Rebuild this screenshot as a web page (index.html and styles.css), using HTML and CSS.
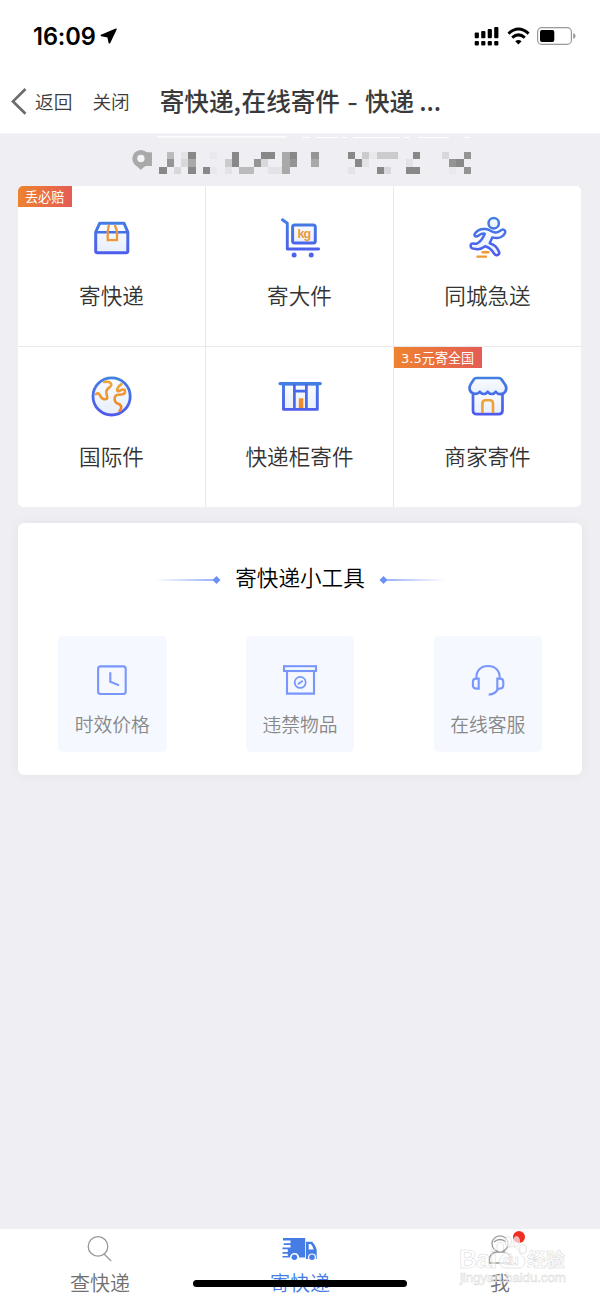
FILE: index.html
```html
<!DOCTYPE html>
<html lang="zh-CN">
<head>
<meta charset="utf-8">
<title>寄快递</title>
<link rel="stylesheet" href="styles.css">
</head>
<body>
<svg class="defs" width="0" height="0">
  <defs>
    <linearGradient id="blue-row1" gradientUnits="userSpaceOnUse" x1="0" y1="218" x2="0" y2="258"><stop offset="0" stop-color="#4280e2"/><stop offset="1" stop-color="#5058ee"/></linearGradient>
    <linearGradient id="blue-row2" gradientUnits="userSpaceOnUse" x1="0" y1="377" x2="0" y2="416"><stop offset="0" stop-color="#4280e2"/><stop offset="1" stop-color="#5058ee"/></linearGradient>
    <linearGradient id="tint" x1="0" y1="0" x2="0" y2="1"><stop offset="0" stop-color="#fafcff"/><stop offset="1" stop-color="#e7effc"/></linearGradient>
    <linearGradient id="orange" gradientUnits="userSpaceOnUse" x1="0" y1="377" x2="0" y2="416"><stop offset="0" stop-color="#f0ab3c"/><stop offset="1" stop-color="#ee7d28"/></linearGradient>
  </defs>
</svg>
<div class="screen">
  <header class="top">
    <div class="status">
      <span class="time">16:09</span>
      <svg class="locate" width="18" height="16" viewBox="100 28 18 16"><path d="M116 29.2 L101.4 35.4 L108 36.6 L109.4 42.8 Z" fill="#000" stroke="#000" stroke-width="1.6" stroke-linejoin="round"/></svg>
      <svg class="signals" width="104" height="22" viewBox="473 25 104 22">
        <g fill="#000">
          <rect x="474.7" y="32.5" width="4.2" height="5.8" rx="1"/><rect x="481.2" y="31" width="4.2" height="7.3" rx="1"/><rect x="487.7" y="29" width="4.2" height="9.3" rx="1"/><rect x="494.2" y="27" width="4.2" height="11.3" rx="1"/>
          <rect x="474.7" y="41" width="4.2" height="4.6" rx="1"/><rect x="481.2" y="41" width="4.2" height="4.6" rx="1"/><rect x="487.7" y="41" width="4.2" height="4.6" rx="1"/><rect x="494.2" y="41" width="4.2" height="4.6" rx="1"/>
          <path d="M515.2 41.3 Q518.4 38.8 521.6 41.3 L518.4 44.4Z"/>
          <rect x="540" y="30" width="14.3" height="12" rx="2"/>
          <path d="M573.2 33 Q575.6 33.8 575.6 36 T573.2 39Z" fill="#999"/>
        </g>
        <g fill="none" stroke="#000" stroke-width="3"><path d="M508.5 33.6 Q518.4 24.5 528.6 33.6"/><path d="M512.2 37.6 Q518.4 32.2 524.8 37.6"/></g>
        <rect x="537.6" y="27.6" width="33.8" height="16.8" rx="4.2" fill="none" stroke="#999" stroke-width="1.2"/>
      </svg>
    </div>
    <nav class="nav">
      <svg class="back" width="18" height="28" viewBox="10 87 18 28"><path d="M25.5 89 L13 101.4 L25.5 113.8" fill="none" stroke="#6c6c6c" stroke-width="2.7"/></svg>
      <span class="nav-link">返回</span>
      <span class="nav-link">关闭</span>
      <h1 class="title">寄快递<i class="comma">,</i>在线寄件<i class="dash">-</i>快递<i class="dots">...</i></h1>
    </nav>
  </header>

  <div class="address">
    <svg width="345" height="46" viewBox="130 134 345 46">
      <path d="M157 136.8 H287 M302 137.5 H310 M316 137.5 H338 M342 137.5 H347 M353 137.5 H400 M404 137.5 H410 M418 137.5 H449 M464 137.5 H470" stroke="#fff" stroke-width="1.2"/>
      <rect x="144" y="152.3" width="8" height="13.7" fill="#a9a9a9"/>
      <circle cx="141" cy="158.6" r="8.7" fill="#a9a9a9"/><path d="M134.5 163.7 L140.8 170 L147.3 163.7Z" fill="#a9a9a9"/>
      <circle cx="140.9" cy="158.5" r="3.7" fill="#f3f3f6"/>
      <g transform="translate(159.3 152) scale(7.247 7.25)" shape-rendering="crispEdges">
        <path fill="#888" d="M4 0h1v1h-1z M10 0h1v2h-1z M14 0h2v1h-2z M18 0h1v1h-1z M0 2h1v1h-1z M4 2h1v1h-1z M6 2h1v1h-1z M26 0h1v1h-1z M35 0h1v1h-1z M27 1h1v1h-1z M41 1h1v1h-1z M30 2h1v1h-1z M34 2h2v1h-2z"/>
        <path fill="#949494" d="M1 1h1v1h-1z M13 1h1v1h-1z M18 1h1v1h-1z M21 0h1v1h-1z M40 1h1v1h-1z M42 0h1v1h-1z M42 2h1v1h-1z"/>
        <path fill="#a9a9aa" d="M4 1h1v1h-1z M17 0h1v3h-1z M21 1h1v1h-1z"/>
        <path fill="#bbbbbd" d="M1 0h1v1h-1z M11 2h2v1h-2z"/>
        <path fill="#cbcbce" d="M9 1h1v1h-1z M28 0h1v1h-1z M30 0h3v1h-3z"/>
        <path fill="#d8d8dc" d="M3 1h1v1h-1z M2 2h1v1h-1z M14 1h1v1h-1z M31 2h1v1h-1z M39 0h1v1h-1z"/>
        <path fill="#e3e3e7" d="M3 0h1v1h-1z M9 2h1v1h-1z M15 2h2v1h-2z M28 1h1v1h-1z M26 2h1v1h-1z M34 1h1v1h-1z"/>
        <path fill="#e9e9ed" d="M7 0h1v1h-1z M7 2h1v1h-1z M29 0h1v1h-1z M40 2h1v1h-1z"/>
      </g>
    </svg>
  </div>

  <main>
    <section class="services">
      <div class="service"><span class="badge">丢必赔</span>
        <svg width="44" height="44" viewBox="90 216 44 44"><path d="M95.7 232 L99.7 223.2 H124 L127.8 232 V251 Q127.8 252.7 126 252.7 H97.5 Q95.7 252.7 95.7 251Z" fill="url(#tint)" stroke="url(#blue-row1)" stroke-width="3" stroke-linejoin="round"/><path d="M95.7 232.3 H127.8" stroke="#4670e5" stroke-width="2.6"/><path d="M108.9 224.8 L107.7 231.5 V240.2 H117 V231.5 L114.8 224.8" fill="none" stroke="#ed9838" stroke-width="2.3"/></svg>
        <span class="label">寄快递</span></div>
      <div class="service">
        <svg width="44" height="44" viewBox="278 216 44 44"><rect x="292.6" y="225" width="22.7" height="18" rx="2" fill="url(#tint)" stroke="url(#blue-row1)" stroke-width="3"/><path d="M282.4 219.8 L287.3 223.2 V249 H318.6" fill="none" stroke="url(#blue-row1)" stroke-width="2.9" stroke-linecap="round" stroke-linejoin="round"/><circle cx="294.1" cy="255" r="2.5" fill="#4e63eb"/><circle cx="311.2" cy="255" r="2.5" fill="#4e63eb"/><text x="297.5" y="238" class="kg">kg</text></svg>
        <span class="label">寄大件</span></div>
      <div class="service">
        <svg width="44" height="44" viewBox="466 216 44 44"><g fill="url(#tint)" stroke="url(#blue-row1)" stroke-width="2.5" stroke-linejoin="round" stroke-linecap="round"><circle cx="493.7" cy="223.2" r="5.2"/><path d="M475.2 233.3 C478 229.1 483 228.6 486.1 229.1 C489.6 229.6 491.2 231.8 495 232.5 C499.5 233.3 500.8 228.5 503.6 229.6 C507 231 504.4 235.4 501.2 237 C497.7 238.8 494.6 238 492.3 237.4 L489.7 243.2 C495.2 244.6 496.8 247.6 498.9 251.5 C500.4 254.4 496.4 256.8 494.2 253.8 C491.8 249.9 489.7 247.5 485.2 246.3 C482.8 248.1 480.5 249.8 477 249.2 C474 248.8 470 249.3 470.7 244.9 C471.5 241.8 474.5 244.6 477.1 243.5 C481.1 241.5 483.1 237.8 484.8 233.8 C480.5 232.4 478.6 236.9 475.7 236.6 C474 236.2 474.2 234.6 475.2 233.3Z"/></g><path d="M482.6 252.3 H488.4 M477.5 256.6 H486" stroke="#ee9836" stroke-width="2.4" stroke-linecap="round"/></svg>
        <span class="label">同城急送</span></div>
      <div class="service">
        <svg width="44" height="44" viewBox="90 375 44 44"><circle cx="111.6" cy="396.4" r="18.6" fill="url(#tint)" stroke="url(#blue-row2)" stroke-width="2.8"/><g fill="none" stroke="url(#orange)" stroke-width="2.6" stroke-linecap="round" stroke-linejoin="round"><path d="M104 382 C109 381 111.5 382.5 111.3 385.2 C111 387.5 106 388.3 106.3 392 C106.3 395 107.8 396.5 107.1 398.5 C105.4 399.9 102.3 399.2 101.1 397.3 C99.6 395.2 99.4 391.7 96 394.2"/><path d="M121.4 384.2 C117.2 387 116.2 390.8 118.1 391.2 C120.2 391.1 122.4 388.2 124.8 390 C126 394 123 394.8 118.4 394.8 C113.3 394.5 113.5 402.4 118.3 403.7 C122.4 405.5 121.6 408.2 119.5 411"/></g></svg>
        <span class="label">国际件</span></div>
      <div class="service">
        <svg width="44" height="44" viewBox="278 375 44 44"><path d="M283.5 384 H317.3 V409.4 H283.5Z" fill="url(#tint)" stroke="url(#blue-row2)" stroke-width="2.9" stroke-linejoin="round"/><path d="M280 383.6 H320.3" stroke="#437ce2" stroke-width="3.1" stroke-linecap="round"/><path d="M294.4 384 V409 M306.4 384 V409 M294.4 391.2 H306.4" stroke="#4868e8" stroke-width="2.7" fill="none"/><rect x="298.8" y="398.2" width="4.5" height="9.8" rx=".5" fill="url(#orange)"/></svg>
        <span class="label">快递柜寄件</span></div>
      <div class="service"><span class="badge">3.5元寄全国</span>
        <svg width="44" height="44" viewBox="466 375 44 44"><g fill="url(#tint)" stroke="url(#blue-row2)" stroke-width="2.7" stroke-linejoin="round"><path d="M473 392 V410.5 Q473 414.2 477 414.2 H498.7 Q502.5 414.2 502.5 410.5 V392"/><path d="M476.4 378 H499 Q500.5 378 501.5 379.4 L505.2 384.8 C508.4 390 504.3 394.4 500 394.2 Q497.5 394.2 495.7 391.8 Q493.8 394.2 491.7 394 Q489.5 394 487.7 391.8 Q485.8 394.2 483.8 394 Q481.7 394 479.8 391.8 C477 395 471.8 394.3 469.8 390.2 Q468.8 387 470.8 384 L473.8 379.4 Q474.8 378 476.4 378Z"/></g><path d="M482.4 413 V403.7 Q482.4 400.2 485.5 400.2 H489.8 Q493 400.2 493 403.7 V413" fill="none" stroke="#eea138" stroke-width="2.6"/></svg>
        <span class="label">商家寄件</span></div>
    </section>

    <section class="tools">
      <h2 class="tools-title">
        <svg width="66" height="10" viewBox="0 0 66 10"><defs><linearGradient id="fade-l"><stop offset="0" stop-color="#6d90f5" stop-opacity="0"/><stop offset="1" stop-color="#6d90f5"/></linearGradient></defs><rect x="0" y="4.3" width="60" height="1.4" fill="url(#fade-l)"/><path d="M61.5 1 L65.5 5 L61.5 9 L57.5 5Z" fill="#6d90f8"/></svg>
        <span>寄快递小工具</span>
        <svg width="66" height="10" viewBox="0 0 66 10"><defs><linearGradient id="fade-r"><stop offset="0" stop-color="#6d90f5"/><stop offset="1" stop-color="#6d90f5" stop-opacity="0"/></linearGradient></defs><rect x="6" y="4.3" width="60" height="1.4" fill="url(#fade-r)"/><path d="M4.5 1 L8.5 5 L4.5 9 L.5 5Z" fill="#6d90f8"/></svg>
      </h2>
      <div class="tool-row">
        <div class="tool">
          <svg width="36" height="36" viewBox="94.5 662 36 36" fill="none" stroke="#7896fb" stroke-width="2.1"><rect x="98.6" y="666.4" width="27.6" height="27.6" rx="2.5"/><path d="M110.8 672.3 V681.8 L119.6 685.4"/></svg>
          <span>时效价格</span></div>
        <div class="tool">
          <svg width="36" height="36" viewBox="282 662 36 36" fill="none" stroke="#7896fb" stroke-width="2.1"><rect x="284" y="666.2" width="32" height="4.8"/><path d="M287 671 V693.6 H314 V671"/><circle cx="300.2" cy="682.4" r="5.5" stroke-width="1.7"/><path d="M298 684.2 L302.7 680.8" stroke-width="2"/></svg>
          <span>违禁物品</span></div>
        <div class="tool">
          <svg width="36" height="36" viewBox="469.5 662 36 36" fill="none" stroke="#7896fb" stroke-width="2.1"><path d="M476 678 C475.5 670.5 480.5 666 487.5 666 C494.5 666 499.6 670.5 499.1 678 M497.7 688.8 Q494.8 694.4 488.2 694.6"/><path d="M478.2 678.6 H475.5 Q472.4 678.6 472.4 682 V685 Q472.4 688.6 475.8 688.6 H478.2Z M496.8 678.6 H499.5 Q502.8 678.6 502.8 682 V685 Q502.8 688.6 499.5 688.6 H496.8Z"/></svg>
          <span>在线客服</span></div>
      </div>
    </section>
  </main>

  <footer class="tabs">
    <div class="tab">
      <svg width="40" height="32" viewBox="80 1233 40 32" fill="none" stroke="#999" stroke-width="1.3"><circle cx="98" cy="1246.4" r="9.8"/><path d="M104 1254 L111.2 1261"/></svg>
      <span>查快递</span></div>
    <div class="tab active">
      <svg width="40" height="32" viewBox="280 1233 40 32" fill="#467de5"><path d="M283 1238 H305.2 V1257.5 H299.2 A4.6 4.6 0 0 0 290 1257.5 H282.5 V1256 H287.8 V1253.8 H282.5 V1252.1 H287.8 V1249.2 H282.5 V1247.6 H290.5 V1245 H283.8 V1243.3 H290.5 V1240.4 H283Z"/><path fill-rule="evenodd" d="M306 1241.8 H312.2 Q315.6 1245 316.7 1249.6 V1259 H306Z M308.7 1244 V1249.5 H313.7 Q313 1246.2 310.8 1244Z"/><circle cx="312" cy="1257.5" r="4" fill="#fff"/><circle cx="294.4" cy="1257.2" r="2.8"/><circle cx="312" cy="1257.2" r="2.8"/></svg>
      <span>寄快递</span></div>
    <div class="tab me">
      <svg width="40" height="32" viewBox="480 1233 40 32" fill="none" stroke="#999" stroke-width="1.3"><circle cx="500" cy="1243.8" r="8"/><path d="M494 1242 Q500 1237 506 1242" /><path d="M489.5 1263 V1258 Q491 1253 496 1252 H504 Q509 1253 510.5 1258 V1263Z"/></svg>
      <i class="dot"></i>
      <span>我</span></div>
    <div class="home-bar"></div>
    <svg class="watermark" width="116" height="56" viewBox="456 1232 116 56">
      <g fill="#fff" fill-opacity=".65" stroke="#dcdcdc" stroke-width=".8">
        <ellipse cx="508.3" cy="1241.5" rx="3.1" ry="5"/><ellipse cx="516.5" cy="1241.5" rx="3.1" ry="5"/><ellipse cx="500.3" cy="1247" rx="3.4" ry="4.5"/><ellipse cx="523" cy="1249" rx="3.4" ry="4.5"/>
        <path d="M512 1246.5 C518 1246.5 517.5 1252 522.5 1256 C527 1260 525 1268 518.5 1268 H505.5 C499 1268 497.5 1260 502 1256 C506.5 1252 506.5 1246.5 512 1246.5Z"/>
      </g>
      <g class="wm">
        <text x="459" y="1268" class="wm-main" textLength="38">Bai</text>
        <text x="503" y="1265" class="wm-du" textLength="16">du</text>
        <text x="527" y="1267" class="wm-cn" textLength="38">经验</text>
        <text x="460" y="1282" class="wm-url" textLength="106">jingyan.baidu.com</text>
      </g>
    </svg>
  </footer>
</div>
</body>
</html>
```
FILE: styles.css
```css
* { box-sizing: border-box; }
body { margin: 0; font-family: "Noto Sans CJK SC", sans-serif; font-weight: 350; color: #333; background: #eeeef3; }
svg { display: block; flex: none; }
.defs { position: absolute; }
.screen { display: flex; flex-direction: column; height: 1299px; overflow: hidden; }
.top { height: 134px; background: #fff; flex: none; border-bottom: 1px solid #f5f5f8; }
.status { display: flex; align-items: center; height: 72px; padding: 0 23px 0 33px; }
.time { width: 67px; padding-top: 1px; font: 600 23.6px/30px Inter, sans-serif; letter-spacing: -.1px; color: #000; white-space: nowrap; }
.signals { margin-left: auto; }
.nav { display: flex; align-items: center; height: 58px; padding-left: 10px; }
.nav-link { margin-left: 7px; font-size: 18.7px; line-height: 28px; color: #3c3c3c; white-space: nowrap; }
.nav-link + .nav-link { margin-left: 20px; }
.title { display: flex; margin: -2px 0 0 30px; font-size: 24.6px; font-weight: 500; line-height: 36px; color: #3a3a3a; white-space: nowrap; }
.title i { font-style: normal; }
.comma { width: 8px; }
.dash { width: 25px; text-align: center; transform: scaleX(1.2); }
.dots { padding-left: 5px; }
.address { display: flex; height: 52px; padding: 0 0 0 130px; flex: none; }
main { flex: 1; padding: 0 18px; }
.services { display: grid; grid-template-columns: 188px 188px 187px; grid-template-rows: 161px 160px; width: 563px; border-radius: 5px; overflow: hidden; background: #fff; }
.service { position: relative; display: flex; flex-direction: column; align-items: center; padding-top: 30px; border-right: 1px solid #e9e9ec; border-bottom: 1px solid #e9e9ec; }
.service:nth-child(3n) { border-right: 0; }
.service:nth-child(n+4) { border-bottom: 0; padding-top: 28px; }
.label { margin-top: 19px; font-size: 21.6px; line-height: 32px; white-space: nowrap; }
.service:nth-child(n+4) .label { margin-top: 21px; }
.badge { position: absolute; left: 0; top: 0; height: 21px; padding: 1px 7.5px 0 7px; font: 400 13.1px/22px "DejaVu Sans", "Noto Sans CJK SC", sans-serif; color: #fff; background: linear-gradient(100deg, #ee842f, #e45b55); white-space: nowrap; }
.kg { font: bold 12.5px "Liberation Sans", sans-serif; letter-spacing: -1px; fill: #ee9836; }
.tools { width: 564px; height: 252px; margin-top: 16px; padding: 36px 40px 0; border-radius: 6px; background: #fff; box-shadow: 0 0 12px rgba(0,0,0,.05); }
.tools-title { display: flex; justify-content: center; align-items: center; gap: 14px; margin: 0; height: 34px; font-size: 21.6px; font-weight: 350; color: #000; }
.tools-title svg { margin-top: 8px; }
.tool-row { display: flex; justify-content: space-between; margin-top: 43px; }
.tool { display: flex; flex-direction: column; align-items: center; width: 108.5px; height: 116px; padding-top: 26px; border-radius: 5px; background: #f5f8fe; }
.tool span { margin-top: 12px; font-size: 18.8px; line-height: 28px; color: #888; white-space: nowrap; }
.tabs { position: relative; display: grid; grid-template-columns: repeat(3, 1fr); height: 70px; flex: none; background: #fff; }
.tab { position: relative; display: flex; flex-direction: column; align-items: center; padding-top: 4px; color: #707070; }
.tab span { margin-top: 3px; font-size: 20px; line-height: 30px; }
.active span { color: #467de5; }
.dot { position: absolute; left: 113px; top: 2px; width: 12px; height: 12px; border-radius: 50%; background: #ee2f22; }
.home-bar { position: absolute; left: 193px; top: 51px; width: 214px; height: 7px; border-radius: 4px; background: #000; }
.watermark { position: absolute; left: 456px; top: 3px; }
.wm text { fill: #fff; fill-opacity: .5; stroke: #d8d8d8; stroke-width: .5; }
.wm-main { font: bold 25px "Liberation Sans", sans-serif; }
.wm-du { font: bold 15px "Liberation Sans", sans-serif; }
.wm-cn { font: bold 19px "Noto Sans CJK SC", sans-serif; }
.wm-url { font: 13.5px "Liberation Sans", sans-serif; }
```
